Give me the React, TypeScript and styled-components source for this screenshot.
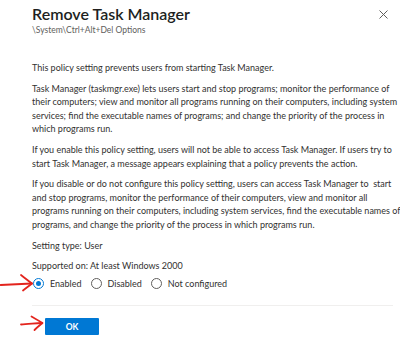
import styled, { createGlobalStyle } from "styled-components";

const GlobalStyle = createGlobalStyle`
  html, body {
    margin: 0;
    padding: 0;
    background: #ffffff;
  }
  body {
    font-family: "Segoe UI", Lato, "Open Sans", sans-serif;
    color: #323130;
  }
`;

const paragraphs: string[][] = [
  ["This policy setting prevents users from starting Task Manager."],
  [
    "Task Manager (taskmgr.exe) lets users start and stop programs; monitor the performance of",
    "their computers; view and monitor all programs running on their computers, including system",
    "services; find the executable names of programs; and change the priority of the process in",
    "which programs run.",
  ],
  [
    "If you enable this policy setting, users will not be able to access Task Manager. If users try to",
    "start Task Manager, a message appears explaining that a policy prevents the action.",
  ],
  [
    "If you disable or do not configure this policy setting, users can access Task Manager to\u00a0 start",
    "and stop programs, monitor the performance of their computers, view and monitor all",
    "programs running on their computers, including system services, find the executable names of",
    "programs, and change the priority of the process in which programs run.",
  ],
  ["Setting type: User"],
  ["Supported on: At least Windows 2000"],
];

const options = [
  { label: "Enabled", checked: true },
  { label: "Disabled", checked: false },
  { label: "Not configured", checked: false },
];

export default () => {
  return (
    <>
      <GlobalStyle />
      <Panel>
        <Header>
          <div>
            <Title>Remove Task Manager</Title>
            <Path>\System\Ctrl+Alt+Del Options</Path>
          </div>
          <CloseButton aria-label="Close">
            <svg width="9" height="9" viewBox="0 0 9 9">
              <path d="M0.5 0.5 L8.5 8.5 M8.5 0.5 L0.5 8.5" stroke="#605e5c" strokeWidth="1" fill="none" />
            </svg>
          </CloseButton>
        </Header>

        <Description>
          {paragraphs.map((lines, i) => (
            <Paragraph key={i}>
              {lines.map((line, j) => (
                <Line key={j}>{line}</Line>
              ))}
            </Paragraph>
          ))}
        </Description>

        <RadioGroup>
          {/* hand-drawn red arrow pointing at "Enabled" */}
          <Annotation width="34" height="22" viewBox="0 0 34 22" $top={-7} $left={-32}>
            <path d="M0.5 15 C9 14.6, 20 14, 32 13.5" />
            <path d="M21 5 C25 8, 28.5 11, 32 13.5 C29 16, 26 18, 23 20.5" />
          </Annotation>
          {options.map((o) => (
            <RadioOption key={o.label}>
              <RadioCircle $checked={o.checked} />
              {o.label}
            </RadioOption>
          ))}
        </RadioGroup>

        <Divider />

        <Footer>
          {/* hand-drawn red arrow pointing at OK */}
          <Annotation width="24" height="20" viewBox="0 0 24 20" $top={5} $left={-12}>
            <path d="M1 13.5 C7 13, 14 12.6, 22 12" />
            <path d="M11.5 5.5 C15 7.5, 18.5 9.5, 22.5 12 C19.5 14.5, 17 16.5, 14.5 19" />
          </Annotation>
          <PrimaryButton>OK</PrimaryButton>
        </Footer>
      </Panel>
    </>
  );
};

const Panel = styled.div`
  width: 400px;
  height: 351px;
  box-sizing: border-box;
  padding: 4px 7px 0 32px;
  overflow: hidden;
  background: #ffffff;
`;

const Header = styled.div`
  display: flex;
  justify-content: space-between;
  align-items: flex-start;
`;

const Title = styled.h1`
  margin: 0;
  font-size: 16px;
  line-height: 20px;
  font-weight: 600;
  color: #201f1e;
`;

const Path = styled.div`
  margin-top: 1px;
  font-size: 8.5px;
  line-height: 11px;
  color: #605e5c;
`;

const CloseButton = styled.button`
  display: flex;
  align-items: center;
  justify-content: center;
  margin: 6px 5px 0 0;
  padding: 0;
  width: 9px;
  height: 9px;
  border: none;
  background: transparent;
`;

const Description = styled.div`
  display: flex;
  flex-direction: column;
  gap: 7px;
  margin-top: 25px;
  font-size: 9px;
  line-height: 13.6px;
`;

const Paragraph = styled.p`
  margin: 0;
`;

const Line = styled.span`
  display: block;
  white-space: nowrap;
`;

const RadioGroup = styled.div`
  position: relative;
  display: flex;
  align-items: center;
  gap: 8px;
  margin-top: 4px;
  height: 14px;
  font-size: 9px;
`;

const RadioOption = styled.label`
  display: flex;
  align-items: center;
  gap: 6px;
  color: #323130;
`;

const RadioCircle = styled.span<{ $checked: boolean }>`
  position: relative;
  width: 11px;
  height: 11px;
  box-sizing: border-box;
  border-radius: 50%;
  border: 1px solid ${({ $checked }) => ($checked ? "#0078d4" : "#605e5c")};
  margin-left: 1px;
  &::after {
    content: "";
    display: ${({ $checked }) => ($checked ? "block" : "none")};
    position: absolute;
    left: 2px;
    top: 2px;
    width: 5px;
    height: 5px;
    border-radius: 50%;
    background: #0078d4;
  }
`;

const Divider = styled.hr`
  margin: 14px 0 0;
  border: none;
  height: 1.5px;
  background: #f0efee;
`;

const Footer = styled.div`
  position: relative;
  display: flex;
  padding: 12px 0 0 13px;
`;

const PrimaryButton = styled.button`
  display: block;
  width: 54px;
  height: 17px;
  padding: 0;
  border: none;
  border-radius: 1px;
  background: #0078d4;
  color: #ffffff;
  font-family: inherit;
  font-size: 8.5px;
  font-weight: 700;
`;

const Annotation = styled.svg<{ $top: number; $left: number }>`
  position: absolute;
  left: ${({ $left }) => $left}px;
  top: ${({ $top }) => $top}px;
  overflow: visible;
  path {
    fill: none;
    stroke: #e3241d;
    stroke-width: 1.8;
    stroke-linecap: round;
    stroke-linejoin: round;
  }
`;
